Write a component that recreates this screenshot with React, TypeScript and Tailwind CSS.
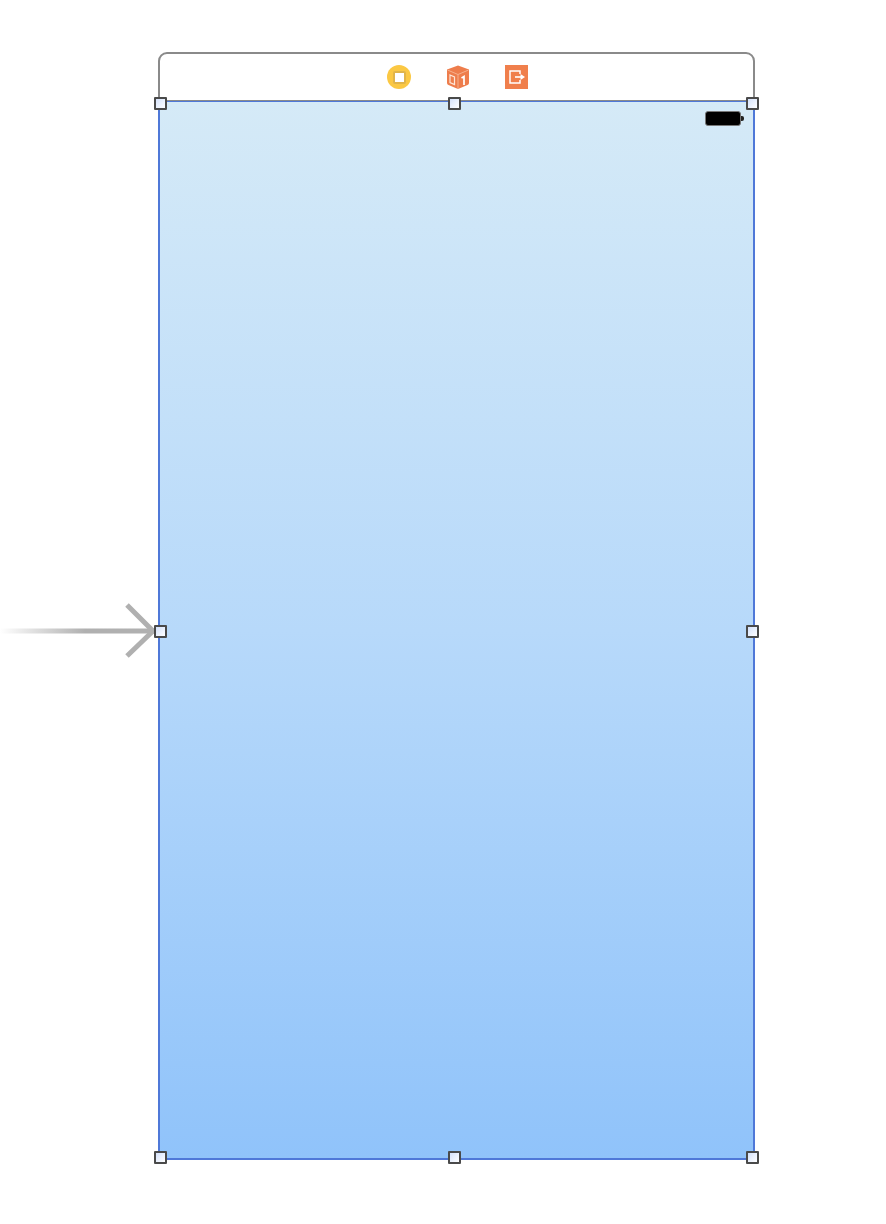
const HANDLES = [
  'left-[-6px] top-[-5px]',
  'left-[288px] top-[-5px]',
  'right-[-6px] top-[-5px]',
  'left-[-6px] top-[523px]',
  'right-[-6px] top-[523px]',
  'left-[-6px] bottom-[-6px]',
  'left-[288px] bottom-[-6px]',
  'right-[-6px] bottom-[-6px]',
];

function Handle({ pos }: { pos: string }) {
  return (
    <div
      className={`absolute ${pos} w-[13px] h-[13px] border-2 border-[#4a4a4a] rounded-[1px] bg-gradient-to-br from-[#d5e2fb] to-white`}
    />
  );
}

function StopIcon() {
  return (
    <div className="w-[24px] h-[24px] rounded-full bg-[#fbc843] flex items-center justify-center">
      <div className="w-[13px] h-[13px] rounded-[2px] bg-white border-2 border-[#e0b44a]" />
    </div>
  );
}

function CubeIcon() {
  return (
    <svg width="24" height="24" viewBox="0 0 24 24">
      <path d="M12 0.5 L23 4.5 V18 Q23 19.5 21.5 20 L12 24 L2.5 20 Q1 19.5 1 18 V4.5 Z" fill="#ee7d4c" />
      <path d="M1.5 5 L12 9.5 L22.5 5 M12 9.5 V24" fill="none" stroke="#f6b08c" strokeWidth="1" />
      <path d="M4 10 L8.5 12 V19.5 L4 17.5 Z" fill="none" stroke="#fde6d8" strokeWidth="1.2" />
      <path d="M15.5 13 L18 11.5 V20" fill="none" stroke="#ffffff" strokeWidth="1.7" />
    </svg>
  );
}

function ExitIcon() {
  return (
    <svg width="23" height="24" viewBox="0 0 23 24">
      <rect width="23" height="24" fill="#f07f4c" />
      <path d="M15 9 V6 H5 V18 H15 V15" fill="none" stroke="#ffffff" strokeWidth="1.5" />
      <path d="M10 12 H16.5" stroke="#ffffff" strokeWidth="1.6" />
      <path d="M15.5 9 L20 12 L15.5 15 Z" fill="#ffffff" />
    </svg>
  );
}

function Battery() {
  return (
    <div className="flex items-center">
      <div className="w-[36px] h-[15px] rounded-[3px] bg-black border border-[#777777]" />
      <div className="w-[3px] h-[5px] rounded-r-[2px] bg-[#222222]" />
    </div>
  );
}

export default function App() {
  return (
    <div className="relative w-[886px] h-[1224px] bg-white overflow-hidden pt-[52px] pl-[158px]">
      {/* Entry point arrow */}
      <svg className="absolute left-0 top-[600px]" width="160" height="60" viewBox="0 0 160 60">
        <defs>
          <linearGradient id="fade" x1="0" y1="0" x2="1" y2="0">
            <stop offset="0" stopColor="#b0b0b0" stopOpacity="0" />
            <stop offset="0.55" stopColor="#b0b0b0" />
            <stop offset="1" stopColor="#b0b0b0" />
          </linearGradient>
        </defs>
        <rect x="0" y="28.5" width="155" height="5" fill="url(#fade)" />
        <path d="M127 5 L153 31 L127 56" fill="none" stroke="#b0b0b0" strokeWidth="5" />
      </svg>

      <div className="w-[597px]">
        {/* Scene dock */}
        <div className="h-[49px] border-t-2 border-x-2 border-b border-[#8a8a8a] rounded-t-[9px] bg-white flex items-center justify-center gap-[35px] pl-[2px]">
          <StopIcon />
          <CubeIcon />
          <ExitIcon />
        </div>

        {/* Scene view */}
        <div className="relative h-[1059px] border-x-2 border-b-2 border-t border-[#4f78d8] bg-gradient-to-b from-[#d5eaf7] via-[#b7d9fa] to-[#90c3fa]">
          <div className="absolute right-[9px] top-[9px]">
            <Battery />
          </div>
          {HANDLES.map(pos => (
            <Handle key={pos} pos={pos} />
          ))}
        </div>
      </div>
    </div>
  );
}
